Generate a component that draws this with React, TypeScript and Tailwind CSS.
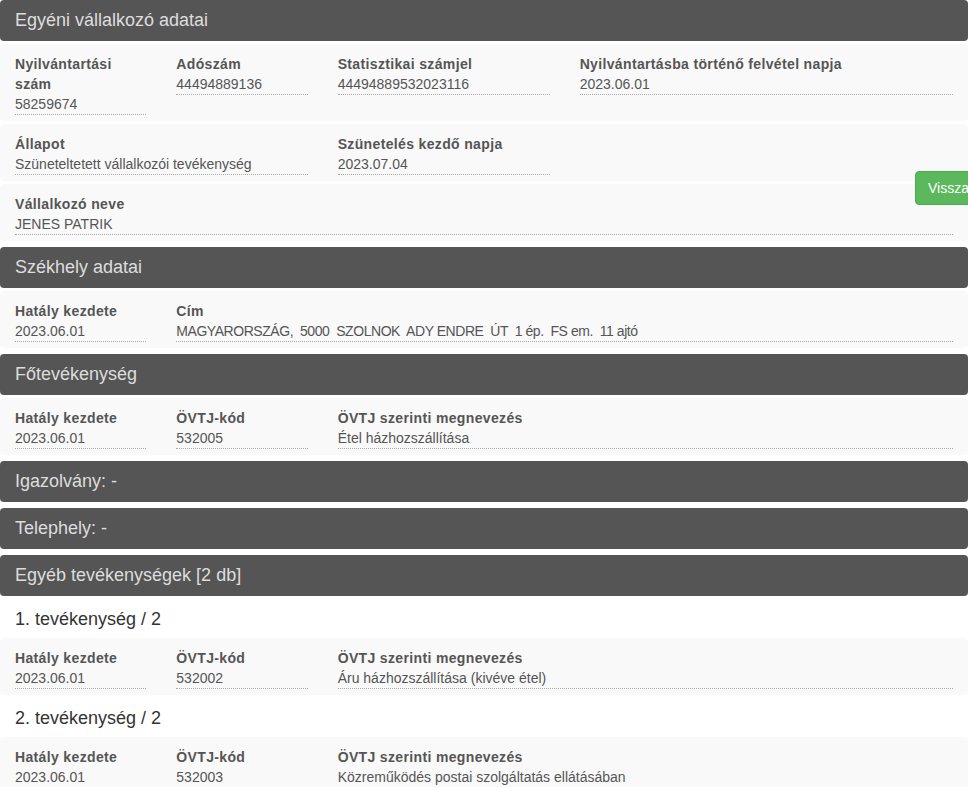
// Vállalkozó adatlap – egyéni vállalkozó nyilvántartási adatai

type FieldProps = {
  label: string
  value: string
  className?: string
  valueClassName?: string
}

function Field({ label, value, className = '', valueClassName = '' }: FieldProps) {
  return (
    <div className={`px-[15px] ${className}`}>
      <div className="font-bold leading-5 tracking-[0.35px] text-[#555]">{label}</div>
      <div
        className={`min-h-[21px] border-b border-dotted border-[#aaa] leading-5 text-[#555] ${valueClassName}`}
      >
        {value}
      </div>
    </div>
  )
}

function Header({ title }: { title: string }) {
  return (
    <div className="flex h-[41px] items-center rounded bg-[#555] px-[15px] text-[18px] text-[#ddd]">
      {title}
    </div>
  )
}

function Row({ children }: { children: React.ReactNode }) {
  return (
    <div className="mt-[3px] grid grid-cols-12 rounded bg-[#f9f9f9] pb-[6px] pt-[10px]">
      {children}
    </div>
  )
}

function Subtitle({ text }: { text: string }) {
  return (
    <div className="px-[15px] pt-[7px] text-[18px] leading-[32px] text-[#333]">{text}</div>
  )
}

export default function App() {
  return (
    <div
      className="relative h-screen overflow-hidden bg-white text-[14px]"
      style={{ fontFamily: '"Liberation Sans", Arial, sans-serif' }}
    >
      {/* Egyéni vállalkozó adatai */}
      <section className="mb-[6px]">
        <Header title="Egyéni vállalkozó adatai" />
        <Row>
          <Field className="col-span-2" label="Nyilvántartási szám" value="58259674" />
          <Field className="col-span-2" label="Adószám" value="44494889136" />
          <Field className="col-span-3" label="Statisztikai számjel" value="44494889532023116" />
          <Field className="col-span-5" label="Nyilvántartásba történő felvétel napja" value="2023.06.01" />
        </Row>
        <Row>
          <Field className="col-span-4" label="Állapot" value="Szüneteltetett vállalkozói tevékenység" />
          <Field className="col-span-3" label="Szünetelés kezdő napja" value="2023.07.04" />
        </Row>
        <Row>
          <Field className="col-span-12" label="Vállalkozó neve" value="JENES PATRIK" />
        </Row>
      </section>

      {/* Székhely adatai */}
      <section className="mb-[6px]">
        <Header title="Székhely adatai" />
        <Row>
          <Field className="col-span-2" label="Hatály kezdete" value="2023.06.01" />
          <Field
            className="col-span-10"
            valueClassName="whitespace-pre tracking-[-0.45px]"
            label="Cím"
            value="MAGYARORSZÁG,  5000  SZOLNOK  ADY ENDRE  ÚT  1 ép.  FS em.  11 ajtó"
          />
        </Row>
      </section>

      {/* Főtevékenység */}
      <section className="mb-[6px]">
        <Header title="Főtevékenység" />
        <Row>
          <Field className="col-span-2" label="Hatály kezdete" value="2023.06.01" />
          <Field className="col-span-2" label="ÖVTJ-kód" value="532005" />
          <Field className="col-span-8" label="ÖVTJ szerinti megnevezés" value="Étel házhozszállítása" />
        </Row>
      </section>

      <section className="mb-[6px]">
        <Header title="Igazolvány: -" />
      </section>

      <section className="mb-[6px]">
        <Header title="Telephely: -" />
      </section>

      {/* Egyéb tevékenységek */}
      <section>
        <Header title="Egyéb tevékenységek [2 db]" />
        <Subtitle text="1. tevékenység / 2" />
        <Row>
          <Field className="col-span-2" label="Hatály kezdete" value="2023.06.01" />
          <Field className="col-span-2" label="ÖVTJ-kód" value="532002" />
          <Field className="col-span-8" label="ÖVTJ szerinti megnevezés" value="Áru házhozszállítása (kivéve étel)" />
        </Row>
        <Subtitle text="2. tevékenység / 2" />
        <Row>
          <Field className="col-span-2" label="Hatály kezdete" value="2023.06.01" />
          <Field className="col-span-2" label="ÖVTJ-kód" value="532003" />
          <Field
            className="col-span-8"
            label="ÖVTJ szerinti megnevezés"
            value="Közreműködés postai szolgáltatás ellátásában"
          />
        </Row>
      </section>

      {/* Visszalépés gomb a jobb szélen */}
      <button className="absolute left-[915px] top-[171px] h-[34px] whitespace-nowrap rounded border border-[#4cae4c] bg-[#5cb85c] px-3 text-[14px] text-white">
        Visszalépés
      </button>
    </div>
  )
}
